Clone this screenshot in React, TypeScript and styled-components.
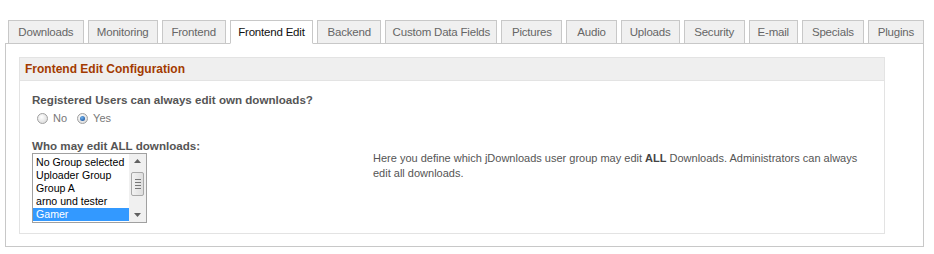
import React from "react";
import styled, { createGlobalStyle } from "styled-components";

const GlobalStyle = createGlobalStyle`
  html, body {
    margin: 0;
    padding: 0;
    background: #fff;
    font-family: "Liberation Sans", Arial, sans-serif;
  }
`;

const Page = styled.div`
  padding: 20px 10px 0 5px;
  width: 919px;
`;

const TabBar = styled.ul`
  display: flex;
  gap: 4px;
  margin: 0 0 0 3px;
  padding: 0;
  list-style: none;
  position: relative;
  z-index: 1;
`;

const Tab = styled.li<{ $active?: boolean; $w: number }>`
  box-sizing: border-box;
  width: ${(p) => p.$w}px;
  height: 24px;
  line-height: 23px;
  text-align: center;
  border: 1px solid #c8c8c8;
  border-bottom: ${(p) => (p.$active ? "1px solid #fff" : "1px solid #c8c8c8")};
  background: ${(p) => (p.$active ? "#fff" : "#f0f0f0")};
  color: ${(p) => (p.$active ? "#111" : "#666")};
  font-size: 11.5px;
  letter-spacing: -0.2px;
  white-space: nowrap;
`;

const Panel = styled.div`
  border: 1px solid #c8c8c8;
  margin-top: -1px;
  padding: 13px 0 13px 13px;
  height: 176px;
`;

const Fieldset = styled.div`
  width: 864px;
  border: 1px solid #e3e3e3;
  height: 175px;
`;

const Legend = styled.div`
  background: #efefef;
  height: 22px;
  line-height: 22px;
  padding-left: 5px;
  border-bottom: 1px solid #e3e3e3;
  color: #a33a00;
  font-weight: bold;
  font-size: 12px;
`;

const Body = styled.div`
  padding: 12px 0 0 12px;
`;

const Label = styled.div`
  color: #555;
  font-weight: bold;
  font-size: 11.6px;
  line-height: 14px;
`;

const RadioRow = styled.div`
  display: flex;
  align-items: center;
  gap: 5px;
  margin: 4px 0 0 5px;
  height: 14px;
  color: #777;
  font-size: 11px;
`;

const Radio = styled.span<{ $checked?: boolean }>`
  box-sizing: border-box;
  width: 11px;
  height: 11px;
  border-radius: 50%;
  border: 1px solid #a0a0a0;
  background: radial-gradient(circle at 40% 35%, #fff, #d4d4d4);
  display: inline-flex;
  align-items: center;
  justify-content: center;
  margin-left: ${(p) => (p.$checked ? 5 : 0)}px;
  &::after {
    content: "";
    display: ${(p) => (p.$checked ? "block" : "none")};
    width: 5px;
    height: 5px;
    border-radius: 50%;
    background: radial-gradient(circle at 40% 35%, #6fb3f0, #0b3f8a);
  }
`;

const Row = styled.div`
  display: grid;
  grid-template-columns: 341px 500px;
  margin-top: 14px;
`;

const ListBox = styled.div`
  display: flex;
  width: 113px;
  height: 68px;
  border: 1px solid #a0a0a0;
  background: #fff;
`;

const Options = styled.div`
  flex: 1;
  padding-top: 2px;
  overflow: hidden;
`;

const Option = styled.div<{ $selected?: boolean }>`
  height: 13px;
  line-height: 13px;
  padding-left: 3px;
  font-size: 10.6px;
  white-space: nowrap;
  color: ${(p) => (p.$selected ? "#fff" : "#000")};
  background: ${(p) => (p.$selected ? "#3399ff" : "transparent")};
`;

const Scrollbar = styled.div`
  width: 17px;
  background: #f0f0f0;
  display: flex;
  flex-direction: column;
  align-items: center;
`;

const Arrow = styled.div`
  height: 14px;
  display: flex;
  align-items: center;
  justify-content: center;
`;

const Thumb = styled.div`
  box-sizing: border-box;
  width: 13px;
  height: 24px;
  margin-top: 4px;
  border: 1px solid #a8a8a8;
  border-radius: 2px;
  background: linear-gradient(to right, #f2f2f2, #dedede);
  display: flex;
  flex-direction: column;
  align-items: center;
  justify-content: center;
  gap: 2px;
  span {
    width: 6px;
    height: 1px;
    background: #777;
  }
`;

const Spacer = styled.div`
  flex: 1;
`;

const Help = styled.div`
  color: #555;
  font-size: 11px;
  line-height: 15px;
  padding-top: 12px;
  b {
    color: #444;
  }
`;

const tabs: [string, number][] = [
  ["Downloads", 77],
  ["Monitoring", 71],
  ["Frontend", 65],
  ["Frontend Edit", 85],
  ["Backend", 65],
  ["Custom Data Fields", 114],
  ["Pictures", 62],
  ["Audio", 51],
  ["Uploads", 60],
  ["Security", 62],
  ["E-mail", 50],
  ["Specials", 63],
  ["Plugins", 57],
];

const groups = [
  "No Group selected",
  "Uploader Group",
  "Group A",
  "arno und tester",
  "Gamer",
];

export default function App() {
  return (
    <Page>
      <GlobalStyle />
      <TabBar>
        {tabs.map(([name, w]) => (
          <Tab key={name} $w={w} $active={name === "Frontend Edit"}>
            {name}
          </Tab>
        ))}
      </TabBar>
      <Panel>
        <Fieldset>
          <Legend>Frontend Edit Configuration</Legend>
          <Body>
            <Label>Registered Users can always edit own downloads?</Label>
            <RadioRow>
              <Radio /> No <Radio $checked /> Yes
            </RadioRow>
            <Row>
              <div>
                <Label>Who may edit ALL downloads:</Label>
                <ListBox>
                  <Options>
                    {groups.map((g) => (
                      <Option key={g} $selected={g === "Gamer"}>
                        {g}
                      </Option>
                    ))}
                  </Options>
                  <Scrollbar>
                    <Arrow>
                      <svg width="7" height="4" viewBox="0 0 7 4">
                        <path d="M0 4 L3.5 0 L7 4 Z" fill="#606060" />
                      </svg>
                    </Arrow>
                    <Thumb>
                      <span />
                      <span />
                      <span />
                      <span />
                    </Thumb>
                    <Spacer />
                    <Arrow>
                      <svg width="7" height="4" viewBox="0 0 7 4">
                        <path d="M0 0 L3.5 4 L7 0 Z" fill="#606060" />
                      </svg>
                    </Arrow>
                  </Scrollbar>
                </ListBox>
              </div>
              <Help>
                Here you define which jDownloads user group may edit <b>ALL</b>{" "}
                Downloads. Administrators can always
                <br />
                edit all downloads.
              </Help>
            </Row>
          </Body>
        </Fieldset>
      </Panel>
    </Page>
  );
}
